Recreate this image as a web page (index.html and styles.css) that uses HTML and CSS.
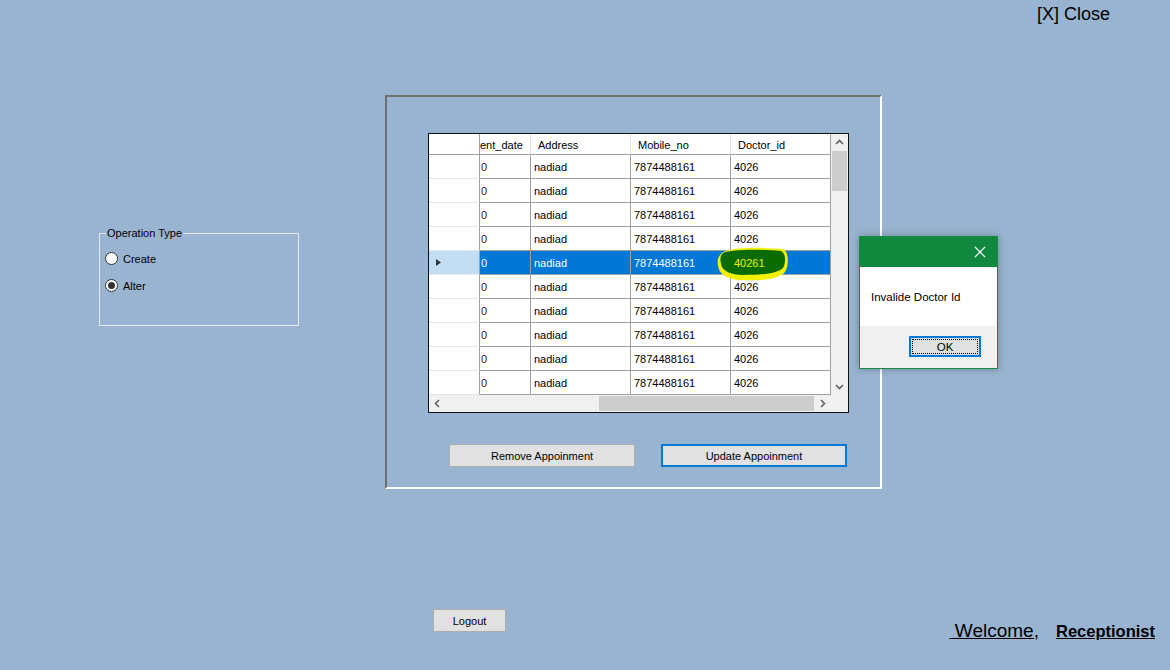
FILE: index.html
```html
<!DOCTYPE html>
<html>
<head>
<meta charset="utf-8">
<link rel="stylesheet" href="styles.css">
</head>
<body>
<div class="form">
  <header class="topbar"><span class="close">[X] Close</span></header>

  <main class="main">
    <div class="group">
      <span class="legend">Operation Type</span>
      <div class="radios">
        <label class="radio"><span class="circle"></span><span>Create</span></label>
        <label class="radio"><span class="circle checked"></span><span>Alter</span></label>
      </div>
    </div>

    <section class="panel">
      <div class="grid">
        <div class="table">
          <div class="row head">
            <div class="rh"></div>
            <div class="c c1">ent_date</div>
            <div class="c c2">Address</div>
            <div class="c c3">Mobile_no</div>
            <div class="c c4">Doctor_id</div>
          </div>
          <div class="row"><div class="rh"></div><div class="c c1">0</div><div class="c c2">nadiad</div><div class="c c3">7874488161</div><div class="c c4">4026</div></div>
          <div class="row"><div class="rh"></div><div class="c c1">0</div><div class="c c2">nadiad</div><div class="c c3">7874488161</div><div class="c c4">4026</div></div>
          <div class="row"><div class="rh"></div><div class="c c1">0</div><div class="c c2">nadiad</div><div class="c c3">7874488161</div><div class="c c4">4026</div></div>
          <div class="row"><div class="rh"></div><div class="c c1">0</div><div class="c c2">nadiad</div><div class="c c3">7874488161</div><div class="c c4">4026</div></div>
          <div class="row sel"><div class="rh"><svg width="7" height="9" viewBox="0 0 7 9"><path d="M1 1 L6 4.5 L1 8 Z" fill="#333"/></svg></div><div class="c c1">0</div><div class="c c2">nadiad</div><div class="c c3">7874488161</div><div class="c c4"><span class="hl-text">40261</span></div></div>
          <div class="row"><div class="rh"></div><div class="c c1">0</div><div class="c c2">nadiad</div><div class="c c3">7874488161</div><div class="c c4">4026</div></div>
          <div class="row"><div class="rh"></div><div class="c c1">0</div><div class="c c2">nadiad</div><div class="c c3">7874488161</div><div class="c c4">4026</div></div>
          <div class="row"><div class="rh"></div><div class="c c1">0</div><div class="c c2">nadiad</div><div class="c c3">7874488161</div><div class="c c4">4026</div></div>
          <div class="row"><div class="rh"></div><div class="c c1">0</div><div class="c c2">nadiad</div><div class="c c3">7874488161</div><div class="c c4">4026</div></div>
          <div class="row"><div class="rh"></div><div class="c c1">0</div><div class="c c2">nadiad</div><div class="c c3">7874488161</div><div class="c c4">4026</div></div>
        </div>
        <div class="vscroll">
          <span class="sbtn"><svg width="17" height="17" viewBox="0 0 17 17"><path d="M5 10 L8.5 6.5 L12 10" stroke="#606060" stroke-width="1.6" fill="none"/></svg></span>
          <span class="vthumb"></span>
          <span class="vfill"></span>
          <span class="sbtn"><svg width="17" height="17" viewBox="0 0 17 17"><path d="M5 7 L8.5 10.5 L12 7" stroke="#606060" stroke-width="1.6" fill="none"/></svg></span>
        </div>
        <div class="hscroll">
          <span class="sbtn"><svg width="17" height="17" viewBox="0 0 17 17"><path d="M10 5 L6.5 8.5 L10 12" stroke="#606060" stroke-width="1.6" fill="none"/></svg></span>
          <span class="hfill"></span>
          <span class="hthumb"></span>
          <span class="sbtn"><svg width="17" height="17" viewBox="0 0 17 17"><path d="M7 5 L10.5 8.5 L7 12" stroke="#606060" stroke-width="1.6" fill="none"/></svg></span>
        </div>
        <div class="corner"></div>
        <svg class="scribble" width="72" height="36" viewBox="0 0 72 36">
          <path d="M4 8 C 10 1, 45 1, 66 3 C 72 5, 72 20, 68 26 C 62 34, 40 35, 22 34 C 10 33, 2 28, 1 20 C 0 14, 1 11, 4 8 Z" fill="#f2f200"/>
          <path d="M6 7 C 14 3, 44 3, 64 5 C 69 7, 69 17, 66 22 C 60 28, 42 29, 26 29 C 14 29, 5 25, 4 18 C 3 13, 3 10, 6 7 Z" fill="#0a6c00"/>
        </svg>
      </div>

      <div class="actions">
        <button class="btn">Remove Appoinment</button>
        <button class="btn focus">Update Appoinment</button>
      </div>
    </section>
  </main>

  <footer class="bottom">
    <button class="btn logout">Logout</button>
    <div class="welcome"><span class="u">&nbsp;Welcome,</span><span class="u role">Receptionist</span></div>
  </footer>

  <div class="dialog">
    <div class="dtitle"><svg width="12" height="12" viewBox="0 0 12 12"><path d="M1 1 L11 11 M11 1 L1 11" stroke="#fff" stroke-width="1.2"/></svg></div>
    <div class="dbody">Invalide Doctor Id</div>
    <div class="dfoot"><button class="okbtn"><span>OK</span></button></div>
  </div>
</div>
</body>
</html>
```

FILE: styles.css
```css
* { box-sizing: border-box; }
html, body { margin: 0; padding: 0; }
body {
  width: 1170px;
  height: 670px;
  overflow: hidden;
  background: #99b4d1;
  font-family: "Liberation Sans", Arial, sans-serif;
  font-size: 11px;
  color: #000;
}
.form { position: relative; width: 1170px; height: 670px; }

.topbar {
  height: 24px;
  display: flex;
  justify-content: flex-end;
  padding: 4px 60px 0 0;
}
.close { font-size: 18px; line-height: 20px; color: #000; }

.main { display: flex; align-items: flex-start; }

.group {
  margin: 209px 0 0 99px;
  width: 200px;
  height: 93px;
  border: 1px solid #e6e9ee;
  padding-left: 5px;
}
.legend {
  display: block;
  width: fit-content;
  margin: -7px 0 0 1px;
  padding: 0 1px;
  line-height: 13px;
  background: #99b4d1;
}
.radios { display: flex; flex-direction: column; gap: 10px; margin-top: 10px; }
.radio { display: flex; align-items: center; gap: 5px; height: 17px; }
.circle {
  width: 13px; height: 13px;
  border-radius: 50%;
  border: 1px solid #333;
  background: #fff;
  display: flex; align-items: center; justify-content: center;
}
.circle.checked::after {
  content: "";
  width: 7px; height: 7px; border-radius: 50%;
  background: #333;
}

.panel {
  margin: 71px 0 0 86px;
  width: 497px;
  height: 394px;
  border-style: solid;
  border-width: 2px;
  border-color: #6f6f6f #ffffff #ffffff #6f6f6f;
  padding: 36px 0 0 41px;
  display: flex;
  flex-direction: column;
  align-items: flex-start;
}

.grid {
  position: relative;
  width: 421px;
  height: 280px;
  border: 1px solid #101010;
  background: #fff;
  display: grid;
  grid-template-columns: 402px 17px;
  grid-template-rows: 261px 17px;
}
.table { display: flex; flex-direction: column; overflow: hidden; }
.row { display: flex; height: 24px; flex: none; }
.row.head { height: 21px; }
.rh, .c {
  height: 100%;
  display: flex;
  align-items: center;
  white-space: nowrap;
  overflow: hidden;
  border-right: 1px solid #a0a0a0;
  border-bottom: 1px solid #a0a0a0;
}
.rh { width: 51px; border-bottom-color: #e6e6e6; padding-left: 6px; }
.c1 { width: 51px; padding-left: 1px; }
.c2, .c3, .c4 { width: 100px; padding-left: 3px; }
.row .c1 { color: #3a2200; }
.head .c, .head .rh { border-bottom-color: #a0a0a0; padding-top: 2px; }
.head .c { border-right-color: #e3e3e3; }
.head .c1 { padding-left: 0; color: #000; }
.head .c2, .head .c3, .head .c4 { padding-left: 7px; }
.head .c4 { border-right-color: #a0a0a0; }
.sel .rh { background: #c3ddf3; }
.sel .c { background: #0078d7; color: #fff; }
.hl-text { position: relative; z-index: 2; color: #e8f000; }

.scribble { position: absolute; left: 288px; top: 112px; z-index: 1; }

.vscroll {
  background: #f0f0f0;
  display: flex;
  flex-direction: column;
}
.sbtn { width: 17px; height: 17px; flex: none; display: block; }
.sbtn svg { display: block; }
.vthumb { display: block; width: 15px; height: 40px; margin-left: 1px; background: #cdcdcd; flex: none; }
.vfill { flex: 1; }
.hscroll { background: #f0f0f0; display: flex; align-items: center; }
.hfill { flex: 1; }
.hthumb { display: block; width: 215px; height: 15px; background: #cdcdcd; }
.corner { background: #f0f0f0; }

.actions { display: flex; gap: 26px; margin: 31px 0 0 21px; }
.btn {
  font-family: "Liberation Sans", Arial, sans-serif;
  font-size: 11px;
  color: #000;
  width: 186px;
  height: 23px;
  background: #e1e1e1;
  border: 1px solid #adadad;
  padding: 0;
  margin: 0;
}
.btn.focus { border: 2px solid #0078d7; }

.bottom { display: flex; align-items: flex-start; margin-top: 120px; }
.logout { width: 73px; margin-left: 433px; }
.welcome { margin: 11px 15px 0 auto; line-height: 22px; }
.u { text-decoration: underline; font-size: 19px; }
.role { font-weight: bold; font-size: 16.5px; margin-left: 17px; }

.dialog {
  position: absolute;
  left: 859px;
  top: 236px;
  width: 139px;
  height: 133px;
  border: 1px solid #138a3e;
  background: #fff;
  box-shadow: 0 0 8px rgba(0,0,0,0.28);
  display: flex;
  flex-direction: column;
}
.dtitle {
  height: 30px;
  background: #10893e;
  display: flex;
  align-items: center;
  justify-content: flex-end;
  padding-right: 11px;
  flex: none;
}
.dbody {
  height: 59px;
  display: flex;
  align-items: center;
  padding-left: 11px;
  font-size: 11.5px;
  color: #000;
  flex: none;
}
.dfoot {
  flex: 1;
  background: #f0f0f0;
  display: flex;
  justify-content: flex-end;
  align-items: flex-start;
  padding: 10px 16px 0 0;
}
.okbtn {
  width: 72px;
  height: 21px;
  border: 2px solid #0078d7;
  background: #e1e1e1;
  padding: 1px;
  margin: 0;
  font-family: "Liberation Sans", Arial, sans-serif;
  font-size: 11.5px;
  color: #000;
}
.okbtn span {
  display: flex;
  align-items: center;
  justify-content: center;
  width: 100%;
  height: 100%;
  border: 1px dotted #000;
}
```
